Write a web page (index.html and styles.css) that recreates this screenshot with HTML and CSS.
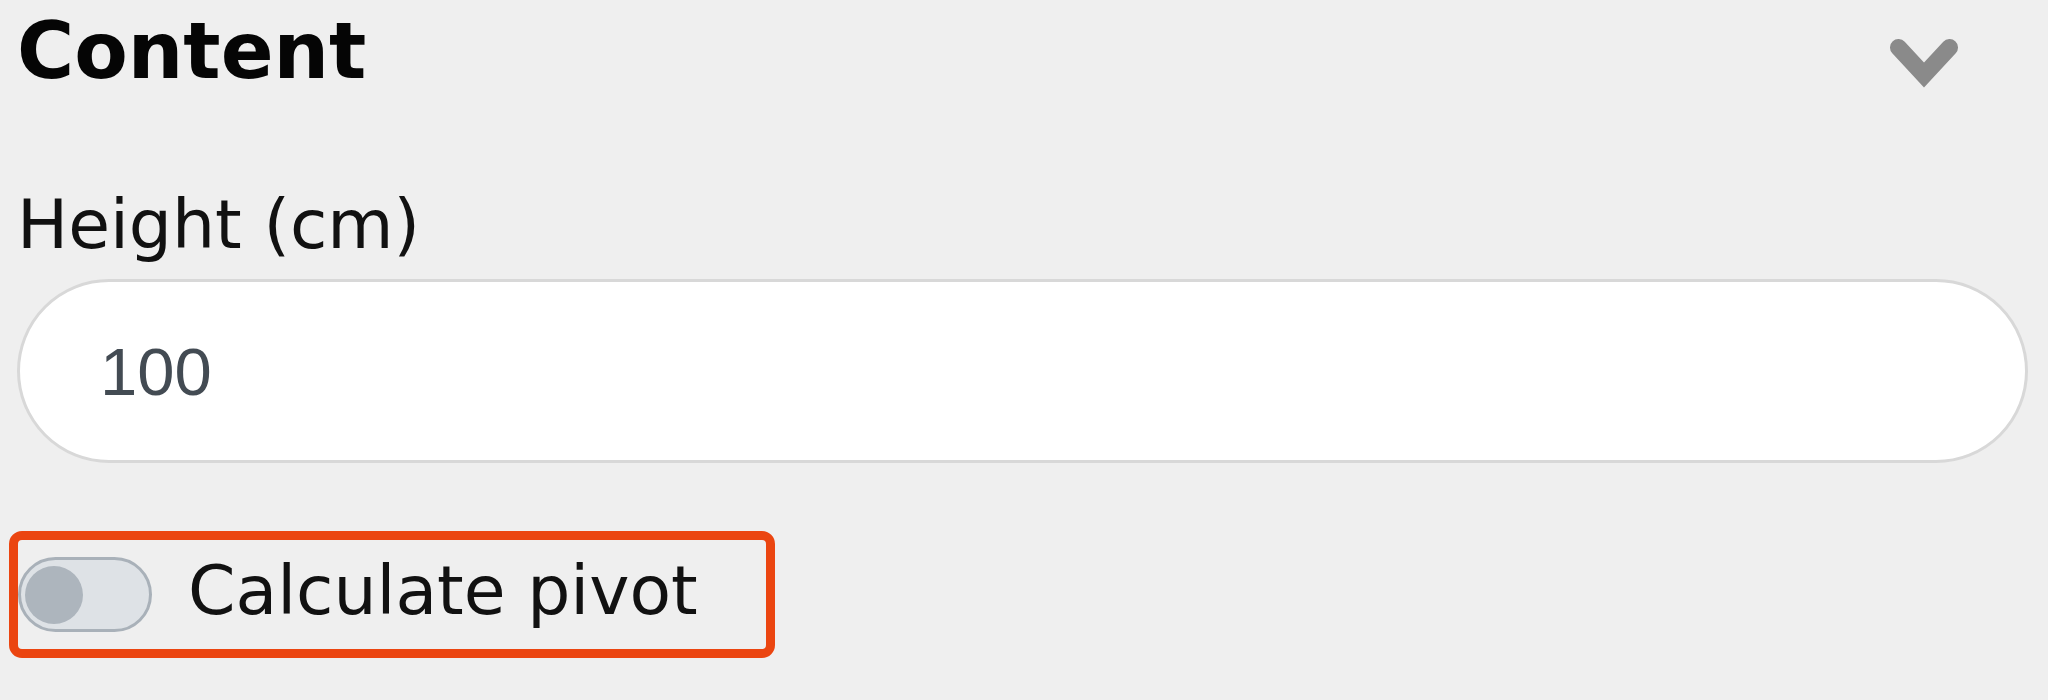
FILE: index.html
```html
<!DOCTYPE html>
<html lang="en">
<head>
    <meta charset="UTF-8">
    <meta name="viewport" content="width=device-width, initial-scale=1.0">
    <title>Content</title>
    <link rel="stylesheet" href="styles.css">
</head>
<body>
    <div class="panel">
        <div class="panel-header">
            <h2>Content</h2>
            <svg class="chevron" width="68" height="50" viewBox="0 0 68 50">
                <path d="M8.5 8.5 L34 36 L59.5 8.5" fill="none" stroke="#8a8a8a" stroke-width="17" stroke-linecap="round" stroke-linejoin="miter"/>
            </svg>
        </div>

        <div class="field">
            <label for="height">Height (cm)</label>
            <input type="text" id="height" name="height" value="100">
        </div>

        <div class="switch-row">
            <span class="switch"><span class="knob"></span></span>
            <span class="switch-label">Calculate pivot</span>
        </div>
    </div>
</body>
</html>
```

FILE: styles.css
```css
body {
    margin: 0;
    padding: 0;
    background-color: #efefef;
    font-family: "DejaVu Sans", "Liberation Sans", sans-serif;
}

.panel {
    padding: 12px 20px 0 17px;
}

.panel-header {
    display: flex;
    justify-content: space-between;
    align-items: flex-start;
}

.panel-header h2 {
    margin: 0;
    font-size: 78px;
    line-height: 1;
    font-weight: bold;
    color: #050505;
}

.chevron {
    margin-top: 27px;
    margin-right: 70px;
}

.field {
    margin-top: 101px;
}

.field label {
    display: block;
    font-size: 68px;
    line-height: 1;
    color: #111;
    margin-bottom: 20px;
}

.field input {
    display: block;
    width: 100%;
    height: 184px;
    box-sizing: border-box;
    padding: 0 0 0 80px;
    border: 3px solid #d8d8d8;
    border-radius: 92px;
    background: white;
    font-family: "Liberation Sans", sans-serif;
    font-size: 67px;
    color: #434b53;
    outline: none;
}

.switch-row {
    display: inline-flex;
    align-items: center;
    gap: 36px;
    margin: 68px 0 0 -8px;
    height: 109px;
    padding: 0 68px 0 0;
    border: 9px solid #eb4510;
    border-radius: 13px;
}

.switch {
    position: relative;
    width: 134px;
    height: 75px;
    box-sizing: border-box;
    border: 3px solid #a9b1b9;
    border-radius: 38px;
    background-color: #dee2e6;
}

.knob {
    position: absolute;
    left: 4px;
    top: 6px;
    width: 58px;
    height: 58px;
    border-radius: 50%;
    background-color: #adb5bd;
}

.switch-label {
    font-size: 68px;
    line-height: 1;
    color: #111;
    margin-top: -8px;
}
```
